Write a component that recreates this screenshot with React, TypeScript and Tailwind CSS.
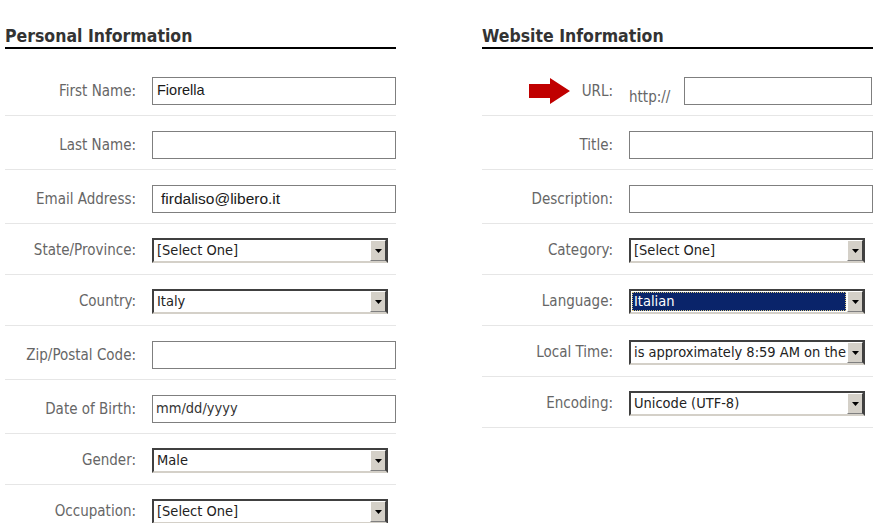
import type { ReactNode } from 'react';

const labelFont = { fontFamily: '"DejaVu Sans Condensed", "DejaVu Sans", sans-serif' };
const arialFont = { fontFamily: '"Liberation Sans", Arial, sans-serif' };

type Field =
  | { kind: 'text'; label: string; value?: string; pad?: string; size?: string; arial?: boolean }
  | { kind: 'select'; label: string; value: string; highlight?: boolean }
  | { kind: 'url'; label: string };

const personal: Field[] = [
  { kind: 'text', label: 'First Name:', value: 'Fiorella', pad: 'pl-[4px]', size: 'text-[14.5px]', arial: true },
  { kind: 'text', label: 'Last Name:' },
  { kind: 'text', label: 'Email Address:', value: 'firdaliso@libero.it', pad: 'pl-[8px]', size: 'text-[15.5px]', arial: true },
  { kind: 'select', label: 'State/Province:', value: '[Select One]' },
  { kind: 'select', label: 'Country:', value: 'Italy' },
  { kind: 'text', label: 'Zip/Postal Code:' },
  { kind: 'text', label: 'Date of Birth:', value: 'mm/dd/yyyy', pad: 'pl-[3px]' },
  { kind: 'select', label: 'Gender:', value: 'Male' },
  { kind: 'select', label: 'Occupation:', value: '[Select One]' },
];

const website: Field[] = [
  { kind: 'url', label: 'URL:' },
  { kind: 'text', label: 'Title:' },
  { kind: 'text', label: 'Description:' },
  { kind: 'select', label: 'Category:', value: '[Select One]' },
  { kind: 'select', label: 'Language:', value: 'Italian', highlight: true },
  { kind: 'select', label: 'Local Time:', value: 'is approximately 8:59 AM on the' },
  { kind: 'select', label: 'Encoding:', value: 'Unicode (UTF-8)' },
];

function TextBox({
  value,
  pad = 'pl-[4px]',
  size = 'text-[14.5px]',
  arial,
  className = 'w-[244px]',
}: {
  value?: string;
  pad?: string;
  size?: string;
  arial?: boolean;
  className?: string;
}) {
  return (
    <div
      className={`${className} h-[28px] border border-[#7f7f7f] bg-white flex items-center ${pad} ${size} ${
        arial ? 'text-[#1a1a1a]' : 'text-[#333]'
      }`}
      style={arial ? arialFont : labelFont}
    >
      {value}
    </div>
  );
}

function SelectBox({ value, highlight }: { value: string; highlight?: boolean }) {
  return (
    <div
      className="w-[236px] h-[25px] flex bg-white border-2 border-t-[#404040] border-l-[#404040] border-r-[#404040] border-b-[#d4d0c8]"
      style={labelFont}
    >
      <div className="flex-1 min-w-0 overflow-hidden p-[1px]">
        <div
          className={`h-full flex items-center whitespace-nowrap text-[14.5px] pl-[2px] ${
            highlight ? 'bg-[#0a246a] text-white outline-1 outline-dotted outline-[#d8c880] -outline-offset-1' : 'text-[#222]'
          }`}
        >
          {value}
        </div>
      </div>
      <div className="w-[16px] shrink-0 bg-[#d4d0c8] border border-t-white border-l-white border-r-[#404040] border-b-[#808080] flex items-center justify-center">
        <svg width="7" height="4" viewBox="0 0 7 4">
          <path d="M0 0h7L3.5 4z" fill="#000" />
        </svg>
      </div>
    </div>
  );
}

function Row({ field }: { field: Field }) {
  const isSelect = field.kind === 'select';
  let control: ReactNode;
  if (field.kind === 'text') control = <TextBox value={field.value} pad={field.pad} size={field.size} arial={field.arial} />;
  else if (field.kind === 'select') control = <SelectBox value={field.value} highlight={field.highlight} />;
  else
    control = (
      <div className="flex items-end gap-[5px]">
        <span className="text-[15px] leading-[18px] text-[#666] mb-[-1px] w-[50px]" style={labelFont}>
          http://
        </span>
        <TextBox className="w-[188px]" />
      </div>
    );

  return (
    <div
      className={`flex items-center border-b border-[#e6e6e6] ${
        isSelect ? 'pt-[14px] pb-[11px]' : 'pt-[15px] pb-[10px]'
      }`}
    >
      <div
        className="w-[131px] shrink-0 flex items-center justify-end gap-[12px] text-[15px] text-[#666]"
        style={labelFont}
      >
        {field.kind === 'url' && (
          <svg width="41" height="26" viewBox="0 0 41 26">
            <path d="M0 6h21V0l20 13-20 13v-6H0z" fill="#c00000" />
          </svg>
        )}
        {field.label}
      </div>
      <div className="ml-[16px]">{control}</div>
    </div>
  );
}

function Section({ title, fields }: { title: string; fields: Field[] }) {
  return (
    <div className="w-[391px]">
      <div
        className="pt-[26px] pb-[1px] border-b-2 border-black text-[17.5px] font-bold leading-[20px] text-[#333]"
        style={labelFont}
      >
        {title}
      </div>
      <div className="mt-[13px]">
        {fields.map((f) => (
          <Row key={f.label} field={f} />
        ))}
      </div>
    </div>
  );
}

export default function App() {
  return (
    <div className="w-[881px] h-[523px] overflow-hidden bg-white flex gap-[86px] pl-[5px]">
      <Section title="Personal Information" fields={personal} />
      <Section title="Website Information" fields={website} />
    </div>
  );
}
